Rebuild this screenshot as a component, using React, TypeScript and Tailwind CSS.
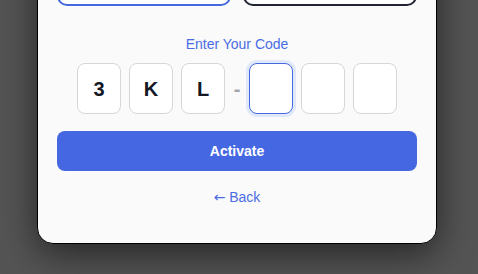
import React from "react";

const filled = ["3", "K", "L"];
const empty = [0, 1, 2];

export default function App() {
  return (
    <div className="h-[274px] w-[478px] overflow-hidden bg-[#545454]" style={{ fontFamily: '"Liberation Sans", Arial, sans-serif' }}>
      <div className="-mt-[60px] ml-[37px] w-[400px] rounded-b-[16px] border border-black bg-[#fafafa] px-[19px] pt-[21px] pb-[36px] shadow-[0_10px_36px_rgba(0,0,0,0.55)]">
        {/* top choices, cut off by the window */}
        <div className="grid grid-cols-2 gap-3">
          <button className="h-[44px] rounded-[10px] border-2 border-[#4469e1] bg-white" />
          <button className="h-[44px] rounded-[10px] border-2 border-[#1f2430] bg-white" />
        </div>

        <p className="mt-[30px] text-center text-[14px] leading-4 text-[#4a6de3]">Enter Your Code</p>

        <div className="mt-[11px] flex items-center justify-center gap-2">
          {filled.map((c) => (
            <div
              key={c}
              className="flex h-[51px] w-[44px] items-center justify-center rounded-lg border border-[#d6d6dc] bg-white text-[20px] font-bold text-[#141824]"
            >
              {c}
            </div>
          ))}
          <span className="w-2 text-center text-[20px] font-bold leading-none text-[#a3a3ab]">-</span>
          {empty.map((i) => (
            <div
              key={i}
              className={
                i === 0
                  ? "h-[51px] w-[44px] rounded-lg border-[1.5px] border-[#4469e1] bg-white shadow-[0_0_0_3px_#e1e8f8]"
                  : "h-[51px] w-[44px] rounded-lg border border-[#d6d6dc] bg-white"
              }
            />
          ))}
        </div>

        <button className="mt-[17px] flex h-[40px] w-full items-center justify-center rounded-lg bg-[#4568e2] text-[14px] font-bold text-white">
          Activate
        </button>

        <p className="mt-[16px] text-center text-[14px] leading-5 text-[#4a6de3]">
          <span style={{ fontFamily: '"DejaVu Sans", sans-serif' }}>←</span> Back
        </p>
      </div>
    </div>
  );
}
